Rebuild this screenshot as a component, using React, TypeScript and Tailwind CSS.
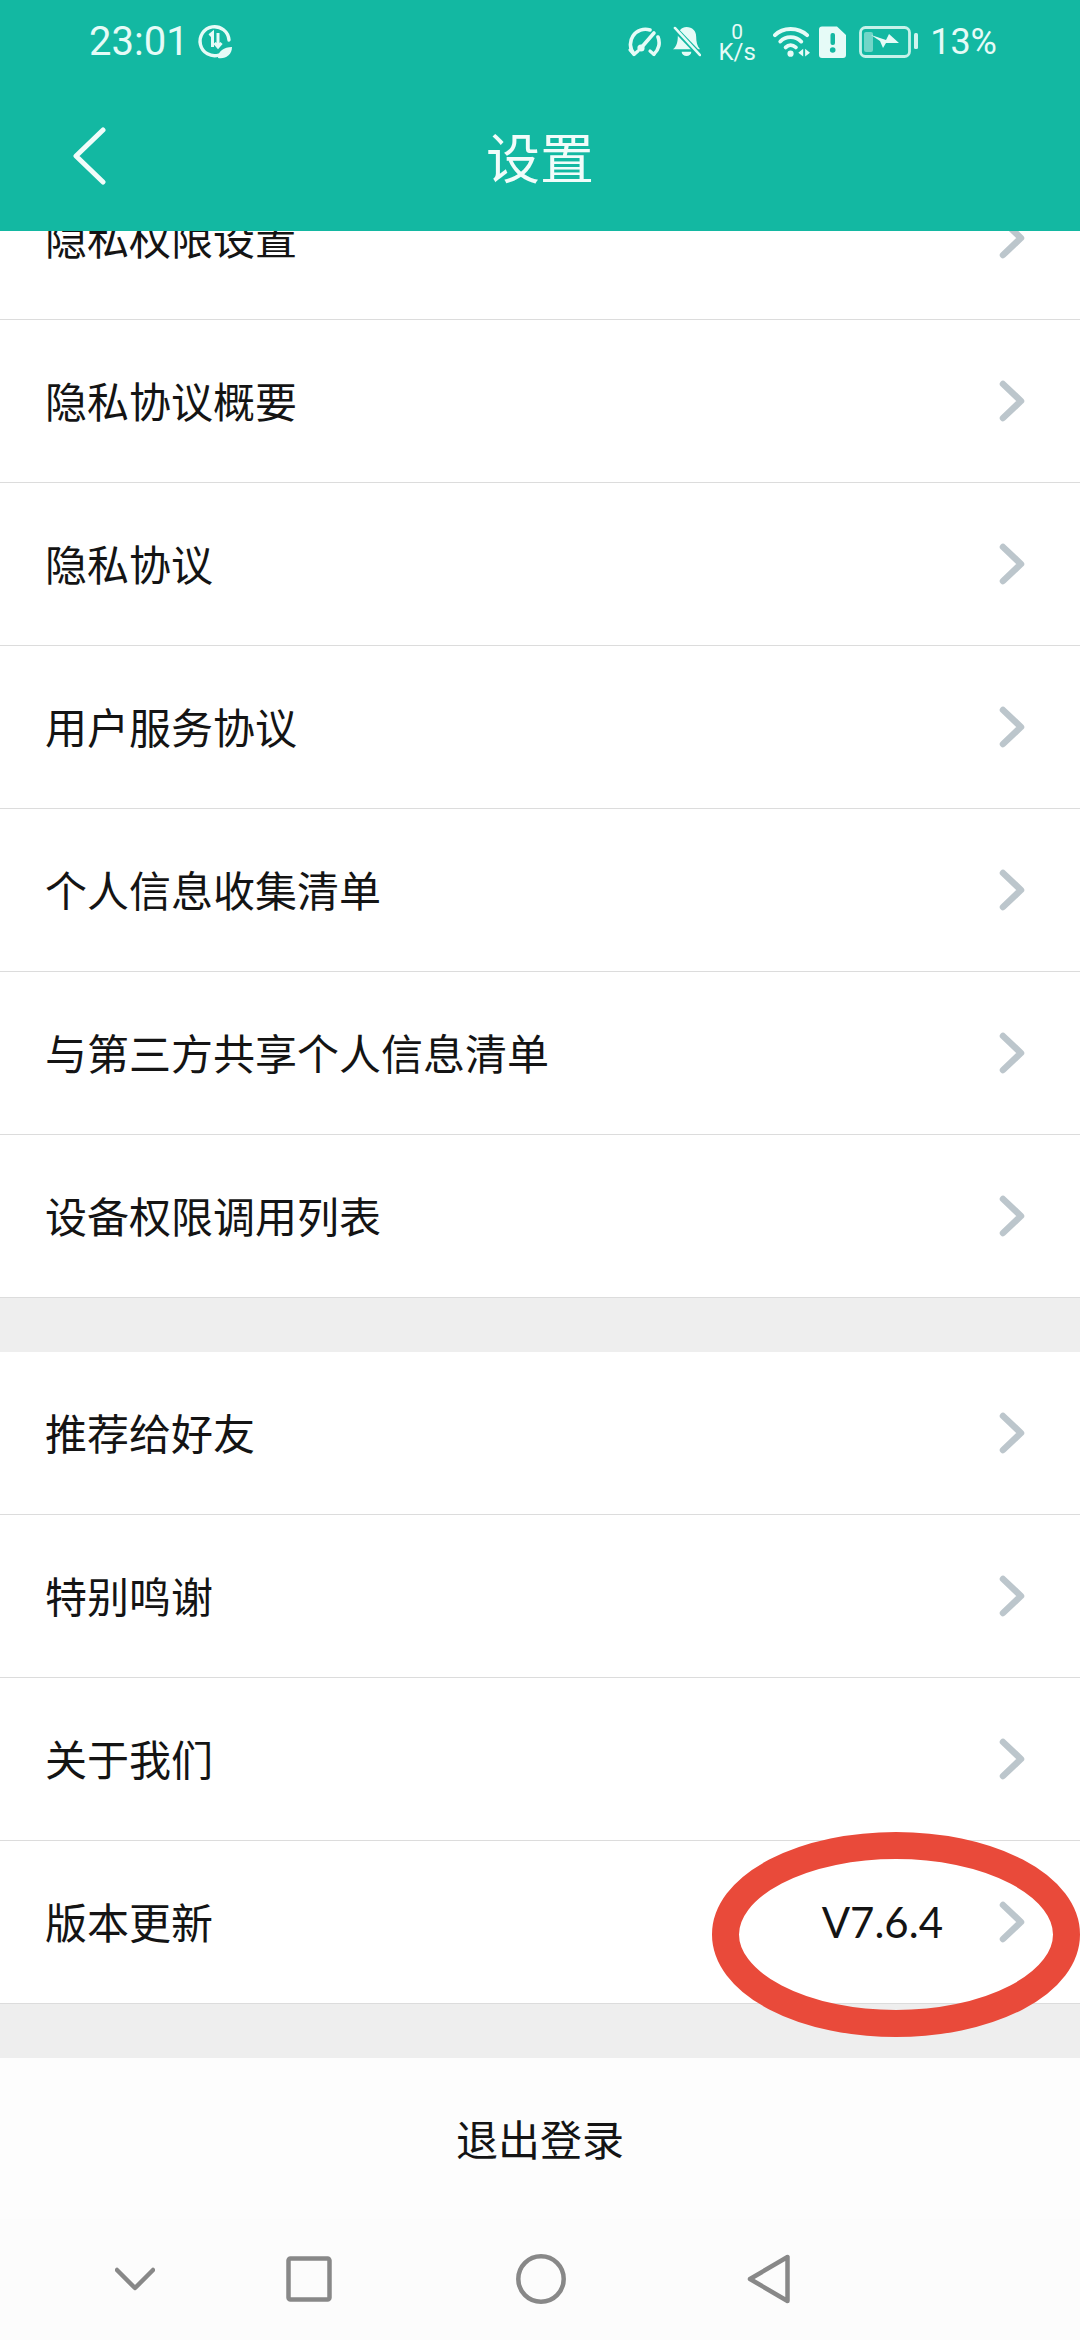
import React from "react";

const c = "#e6fbf7";

function Chevron() {
  return (
    <svg width="30" height="44" viewBox="0 0 30 44" className="block">
      <path d="M6 5 L24 22 L6 39" fill="none" stroke="#bcc6cc" strokeWidth="6.5" strokeLinecap="round" strokeLinejoin="round" />
    </svg>
  );
}

function Row({ label, value }: { label: string; value?: string }) {
  return (
    <div className="h-[163px] bg-white border-b-[1.5px] border-[#dcdcdc] flex items-center pl-[45px] pr-[53px] text-[42px] text-[#141414]">
      <span className="flex-1 leading-none pb-[2px]">{label}</span>
      {value && <span className="mr-[54px] text-[#141414] text-[42px] leading-none" style={{ fontFamily: "Lato, sans-serif" }}>{value}</span>}
      <Chevron />
    </div>
  );
}

function StatusBar() {
  return (
    <div className="h-[80px] flex justify-between items-center pl-[89px] pr-[83px] pt-[3px]" style={{ color: c, fontFamily: "Roboto, sans-serif" }}>
      <div className="flex items-center gap-[8px]">
        <span className="text-[40px] leading-none">23:01</span>
        <svg width="35" height="35" viewBox="0 0 35 35">
          <path d="M22 31 A14.5 14.5 0 1 1 32 16" fill="none" stroke={c} strokeWidth="3.4" strokeLinecap="round" />
          <path d="M12.5 11.5 L15.5 9 V23 M21 9 V23 M17.5 19 L21 23 L24.5 19" fill="none" stroke={c} strokeWidth="3" />
          <path d="M21 34 C21 27 27 23 35 23 C35 31 28 35.5 21 34 Z" fill={c} />
        </svg>
      </div>
      <div className="flex items-center">
        <svg width="34" height="30" viewBox="0 0 34 30" className="mr-[11px]">
          <path d="M7 27 A15 15 0 0 1 23 3 M31 10 A15 15 0 0 1 27 27" fill="none" stroke={c} strokeWidth="3.6" strokeLinecap="round" />
          <path d="M3 23 L7 27.5 L11 24 M23 24 L27 27.5" fill="none" stroke={c} strokeWidth="3.2" strokeLinecap="round" strokeLinejoin="round" />
          <path d="M14 21 L27 6" stroke={c} strokeWidth="3.6" strokeLinecap="round" />
          <circle cx="14" cy="21" r="3.6" fill={c} />
        </svg>
        <svg width="29" height="31" viewBox="0 0 30 32" className="mr-[19px]">
          <path d="M1 24 C5 21 6 16 6 11 C6 5 10 1 15 1 C21 1 25 5 25 11 C25 16 26 21 29 24 Z" fill={c} />
          <path d="M10 26.5 H20 A5 4.5 0 0 1 10 26.5" fill={c} />
          <path d="M2 2 L29 30" stroke="#13b8a2" strokeWidth="5.5" />
          <path d="M3 2 L29 30" stroke={c} strokeWidth="2.6" strokeLinecap="round" />
        </svg>
        <div className="w-[34px] mr-[19px] flex flex-col items-center leading-[20px]">
          <span className="text-[21px]">0</span>
          <span className="text-[24px]">K/s</span>
        </div>
        <svg width="37" height="32" viewBox="0 0 38 32" className="mr-[9px]">
          <path d="M2 9 C10 0.5 26 0.5 35 9" fill="none" stroke={c} strokeWidth="4" strokeLinecap="round" />
          <path d="M7.5 15.5 C13 9.5 23 9.5 29 15.5" fill="none" stroke={c} strokeWidth="4" strokeLinecap="round" />
          <path d="M13 21.5 C16 18.5 20 18.5 23.5 21.5" fill="none" stroke={c} strokeWidth="4" strokeLinecap="round" />
          <circle cx="18" cy="28" r="3.2" fill={c} />
          <path d="M31 23 L26 27 L31 31 Z M33 23 L38 27 L33 31 Z" fill={c} />
        </svg>
        <svg width="27" height="32" viewBox="0 0 27 32" className="mr-[13px]">
          <path d="M3 0.5 H18 L27 9 V29 A3 3 0 0 1 24 32 H3 A3 3 0 0 1 0 29 V3.5 A3 3 0 0 1 3 0.5 Z" fill={c} />
          <rect x="11.5" y="7" width="4.5" height="12" rx="2" fill="#13b8a2" />
          <circle cx="13.7" cy="24" r="2.8" fill="#13b8a2" />
        </svg>
        <svg width="59" height="32" viewBox="0 0 59 32" className="mr-[12px]">
          <rect x="1.5" y="1.5" width="49" height="29" rx="5" fill="none" stroke={c} strokeOpacity="0.85" strokeWidth="2.8" />
          <rect x="5" y="6" width="9" height="20" rx="2" fill={c} fillOpacity="0.45" />
          <path d="M12 9 L27 14 L30 8 L40 17 L27 17 L24 22 L21 15 Z" fill={c} />
          <rect x="55" y="7" width="4" height="16" rx="1.5" fill={c} fillOpacity="0.9" />
        </svg>
        <span className="text-[36px] leading-none">13%</span>
      </div>
    </div>
  );
}

function Header() {
  return (
    <header className="relative z-10 h-[231px] bg-[#13b8a2] shrink-0">
      <StatusBar />
      <div className="grid grid-cols-[1fr_auto_1fr] items-center pt-[41px]">
        <div className="pl-[73px]">
          <svg width="34" height="58" viewBox="0 0 34 58" className="block">
            <path d="M30 3 L3 29 L30 55" fill="none" stroke="#f1fcfa" strokeWidth="5" strokeLinecap="round" strokeLinejoin="round" />
          </svg>
        </div>
        <h1 className="text-[54px] leading-[70px] text-[#f1fcfa]">设置</h1>
        <div />
      </div>
    </header>
  );
}

function Nav() {
  return (
    <nav className="h-[121px] bg-[#fcfcfc] shrink-0 flex items-center pl-[115px] pb-[1px]">
      <svg width="40" height="24" viewBox="0 0 40 24" className="mr-[131px]">
        <path d="M2 3 L20 21 L38 3" fill="none" stroke="#888888" strokeWidth="4.5" strokeLinecap="round" strokeLinejoin="round" />
      </svg>
      <svg width="46" height="46" viewBox="0 0 46 46" className="mr-[184px]">
        <rect x="2.5" y="2.5" width="41" height="41" rx="2" fill="none" stroke="#888888" strokeWidth="4.5" />
      </svg>
      <svg width="50" height="50" viewBox="0 0 50 50" className="mr-[181px]">
        <circle cx="25" cy="25" r="22.7" fill="none" stroke="#888888" strokeWidth="4.5" />
      </svg>
      <svg width="44" height="50" viewBox="0 0 44 50">
        <path d="M40.5 3 V47 L3 25 Z" fill="none" stroke="#888888" strokeWidth="4.5" strokeLinejoin="round" />
      </svg>
    </nav>
  );
}

export default function App() {
  return (
    <div
      className="relative w-[1080px] h-[2340px] overflow-hidden bg-[#eeeeee] flex flex-col"
      style={{ fontFamily: '"Noto Sans CJK SC", "Noto Sans", sans-serif' }}
    >
      <Header />
      <main className="flex-1 overflow-hidden flex flex-col">
        <div className="-mt-[74px]">
          {["隐私权限设置", "隐私协议概要", "隐私协议", "用户服务协议", "个人信息收集清单", "与第三方共享个人信息清单", "设备权限调用列表"].map((t) => (
            <Row key={t} label={t} />
          ))}
        </div>
        <div className="mt-[54px]">
          <Row label="推荐给好友" />
          <Row label="特别鸣谢" />
          <Row label="关于我们" />
          <Row label="版本更新" value="V7.6.4" />
        </div>
        <div className="mt-[54px] flex-1 bg-[#fdfdfd] flex items-center justify-center text-[42px] text-[#141414] pb-[2px]">退出登录</div>
      </main>
      <Nav />
      <svg className="absolute left-[700px] top-[1820px]" width="380" height="230" viewBox="0 0 380 230">
        <ellipse cx="196" cy="114.5" rx="170.5" ry="89" fill="none" stroke="#e94a3a" strokeWidth="27" />
      </svg>
    </div>
  );
}
